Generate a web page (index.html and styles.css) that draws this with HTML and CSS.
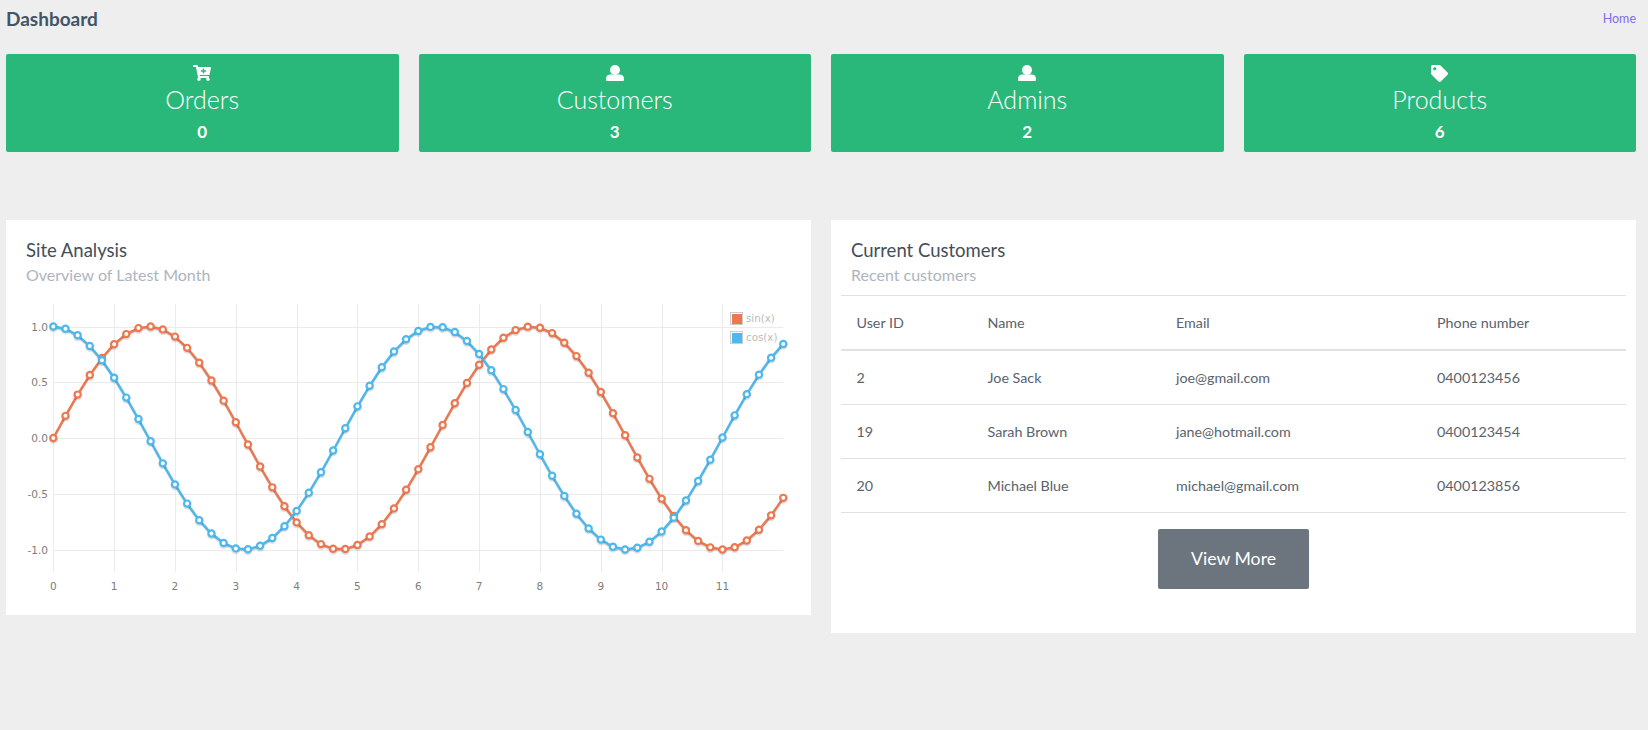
FILE: index.html
```html
<!DOCTYPE html>
<html>
    <head>
        <title>Dashboard</title>
        <link rel="stylesheet" href="styles.css">
    </head>
    <body>
        <div class='topbar'>
            <h2>Dashboard</h2>
            <a href='#'>Home</a>
        </div>

        <div class='stats'>
            <div class='stat'>
                <svg class='icon' viewBox='0 0 576 512'><path d='M504.717 320H211.572l6.545 32h268.418c15.401 0 26.816 14.301 23.403 29.319l-5.517 24.276C523.112 414.668 536 433.828 536 456c0 31.202-25.519 56.557-56.841 55.998-29.844-.533-54.39-24.717-55.132-54.558-.405-16.301 6.126-31.076 16.834-41.44H231.139c10.367 10.032 16.861 24.075 16.861 39.64 0 31.81-26.528 57.424-58.67 55.925-28.54-1.33-51.751-24.387-53.251-52.92-1.158-22.034 10.436-41.455 28.051-51.586L93.883 64H24C10.745 64 0 53.255 0 40V24C0 10.745 10.745 0 24 0h102.529c11.401 0 21.228 8.021 23.513 19.19L159.208 64H551.99c15.401 0 26.816 14.301 23.403 29.319l-47.273 208C525.637 312.246 515.923 320 504.717 320zM408 168h-48v-40c0-8.837-7.163-16-16-16h-16c-8.837 0-16 7.163-16 16v40h-48c-8.837 0-16 7.163-16 16v16c0 8.837 7.163 16 16 16h48v40c0 8.837 7.163 16 16 16h16c8.837 0 16-7.163 16-16v-40h48c8.837 0 16-7.163 16-16v-16c0-8.837-7.163-16-16-16z'/></svg>
                <h3>Orders</h3>
                <strong>0</strong>
            </div>
            <div class='stat'>
                <svg class='icon' viewBox='0 0 18 16'><circle cx='9' cy='5' r='5'/><path d='M1 16a1 1 0 0 1-1-1v-1.500C0 11 2 9.500 4.500 9.500h9c2.500 0 4.500 1.500 4.500 4V15a1 1 0 0 1-1 1z'/></svg>
                <h3>Customers</h3>
                <strong>3</strong>
            </div>
            <div class='stat'>
                <svg class='icon' viewBox='0 0 18 16'><circle cx='9' cy='5' r='5'/><path d='M1 16a1 1 0 0 1-1-1v-1.500C0 11 2 9.500 4.500 9.500h9c2.500 0 4.500 1.500 4.500 4V15a1 1 0 0 1-1 1z'/></svg>
                <h3>Admins</h3>
                <strong>2</strong>
            </div>
            <div class='stat'>
                <svg class='icon icon-tag' viewBox='0 0 512 512'><path d='M0 252.118V48C0 21.49 21.49 0 48 0h204.118a48 48 0 0 1 33.941 14.059l211.882 211.882c18.745 18.745 18.745 49.137 0 67.882L293.823 497.941c-18.745 18.745-49.137 18.745-67.882 0L14.059 286.059A48 48 0 0 1 0 252.118zM112 64c-26.51 0-48 21.49-48 48s21.49 48 48 48 48-21.49 48-48-21.49-48-48-48z'/></svg>
                <h3>Products</h3>
                <strong>6</strong>
            </div>
        </div>

        <div class='panels'>
            <div class='panel'>
                <div class='panel-head'>
                    <h4>Site Analysis</h4>
                    <p>Overview of Latest Month</p>
                </div>
                <svg id='chart' width='805' height='320' viewBox='0 0 805 320'></svg>
            </div>
            <div class='panel panel-table'>
                <div class='panel-head'>
                    <h4>Current Customers</h4>
                    <p>Recent customers</p>
                </div>
                <table>
                    <thead>
                        <tr>
                            <th class='col-id'>User ID</th>
                            <th class='col-name'>Name</th>
                            <th class='col-email'>Email</th>
                            <th>Phone number</th>
                        </tr>
                    </thead>
                    <tbody>
                        <tr><td>2</td><td>Joe Sack</td><td>joe@gmail.com</td><td>0400123456</td></tr>
                        <tr><td>19</td><td>Sarah Brown</td><td>jane@hotmail.com</td><td>0400123454</td></tr>
                        <tr><td>20</td><td>Michael Blue</td><td>michael@gmail.com</td><td>0400123856</td></tr>
                    </tbody>
                </table>
                <div class='more'><a class='btn' href='#'>View More</a></div>
            </div>
        </div>
        <script src='chart.js'></script>
    </body>
</html>
```

FILE: styles.css
```css
body {
    background:#eee;
    color:#59636e;
    font:15px/20px 'Lato', sans-serif;
    margin:0;
    padding:0 12px 0 6px;
}
h2, h3, h4, p {
    margin:0;
    font-weight:normal;
}
.topbar {
    display:flex;
    justify-content:space-between;
    align-items:center;
    height:38px;
}
.topbar h2 {
    color:#435466;
    font-size:19px;
    font-weight:bold;
}
.topbar a {
    color:#7c6fe8;
    font-size:12.5px;
    text-decoration:none;
}
.stats {
    display:grid;
    grid-template-columns:repeat(4, 1fr);
    gap:20px;
    margin-top:16px;
}
.stat {
    background:#2ab87a;
    border-radius:2px;
    color:#fff;
    height:98px;
    padding-top:11px;
    box-sizing:border-box;
    text-align:center;
}
.stat .icon {
    display:block;
    height:16px;
    margin:0 auto;
    fill:#fff;
}
.stat .icon-tag {
    height:17px;
    margin-bottom:-1px;
}
.stat h3 {
    font-size:25px;
    font-weight:300;
    line-height:36px;
}
.stat strong {
    display:block;
    font-size:17px;
    line-height:24px;
    margin-top:3px;
}
.panels {
    display:grid;
    grid-template-columns:repeat(2, 1fr);
    gap:20px;
    align-items:start;
    margin-top:68px;
}
.panel {
    background:#fff;
}
.panel-head {
    height:75px;
    box-sizing:border-box;
    padding:19px 20px 0;
}
.panel-head h4 {
    color:#434e5a;
    font-size:18.5px;
    line-height:22px;
}
.panel-head p {
    color:#adb5bd;
    font-size:16px;
    line-height:24px;
    margin-top:2px;
}
#chart {
    display:block;
}
.grid {
    stroke:#ebebeb;
    stroke-width:1;
}
.axis-label {
    fill:#7d7d7d;
    font:10.5px 'DejaVu Sans', sans-serif;
}
.legend-label {
    fill:#bbb;
    font:10.3px 'DejaVu Sans', sans-serif;
}
.legend-box {
    fill:#fff;
    stroke:#ccc;
}
.panel-table {
    padding-bottom:44px;
}
.panel-table table {
    border-collapse:collapse;
    table-layout:fixed;
    width:785px;
    margin:0 10px;
    font-size:14.3px;
}
th, td {
    text-align:left;
    font-weight:normal;
    padding:0 15.5px;
}
th {
    height:53px;
    border-top:1px solid #dee2e6;
    border-bottom:2px solid #dee2e6;
}
td {
    height:53px;
    border-bottom:1px solid #dee2e6;
}
.col-id { width:100px; }
.col-name { width:157.5px; }
.col-email { width:230px; }
.more {
    display:flex;
    justify-content:center;
    margin-top:16px;
}
.btn {
    background:#6c757d;
    border-radius:2px;
    color:#fff;
    font-size:17.7px;
    line-height:60px;
    text-align:center;
    text-decoration:none;
    width:151px;
}
```

FILE: chart.js
```js
var svg = document.getElementById('chart');
var ns = 'http://www.w3.org/2000/svg';

// chart area in svg coordinates
var left = 47.3, right = 777.3, top_y = 9, bottom = 277;
var zero = 143, unit = 111.5;

function x(v) { return left + (right - left) * v / 12; }
function y(v) { return zero - unit * v; }

function add(name, attrs, text) {
    var el = document.createElementNS(ns, name);
    for (var k in attrs) el.setAttribute(k, attrs[k]);
    if (text !== undefined) el.textContent = text;
    svg.appendChild(el);
    return el;
}

for (var i = 0; i < 12; i++) {
    var gx = Math.round(x(i)) + 0.5;
    add('line', { 'class': 'grid', x1: gx, x2: gx, y1: top_y, y2: bottom });
    add('text', { 'class': 'axis-label', x: x(i), y: 295, 'text-anchor': 'middle' }, i);
}

[1, 0.5, 0, -0.5, -1].forEach(function(v) {
    var gy = Math.round(y(v)) + 0.5;
    add('line', { 'class': 'grid', x1: left, x2: right, y1: gy, y2: gy });
    add('text', { 'class': 'axis-label', x: 42, y: gy + 3, 'text-anchor': 'end' }, v.toFixed(1));
});

function series(fn, color) {
    var pts = [];
    for (var i = 0; i <= 60; i++) {
        var v = i / 5;
        pts.push([x(v), y(fn(v))]);
    }
    var line = pts.join(' ');
    add('polyline', { points: line, fill: 'none', stroke: 'rgba(0,0,0,0.1)', 'stroke-width': 2, transform: 'translate(0,2)' });
    add('polyline', { points: line, fill: 'none', stroke: 'rgba(0,0,0,0.2)', 'stroke-width': 1.5, transform: 'translate(0,1)' });
    add('polyline', { points: line, fill: 'none', stroke: color, 'stroke-width': 2.4 });
    pts.forEach(function(p) {
        add('circle', { cx: p[0], cy: p[1] + 1.5, r: 3.4, fill: 'none', stroke: 'rgba(0,0,0,0.12)', 'stroke-width': 2 });
        add('circle', { cx: p[0], cy: p[1], r: 3.1, fill: '#fff', stroke: color, 'stroke-width': 2.2 });
    });
}

series(Math.sin, '#ed7850');
series(Math.cos, '#4db8ee');

// legend
[['sin(x)', '#ed7850', 17], ['cos(x)', '#4db8ee', 36]].forEach(function(row) {
    add('rect', { 'class': 'legend-box', x: 724.5, y: row[2] + 0.5, width: 12, height: 12 });
    add('rect', { x: 726, y: row[2] + 2, width: 10, height: 10, fill: row[1] });
    add('text', { 'class': 'legend-label', x: 740, y: row[2] + 10 }, row[0]);
});
```
